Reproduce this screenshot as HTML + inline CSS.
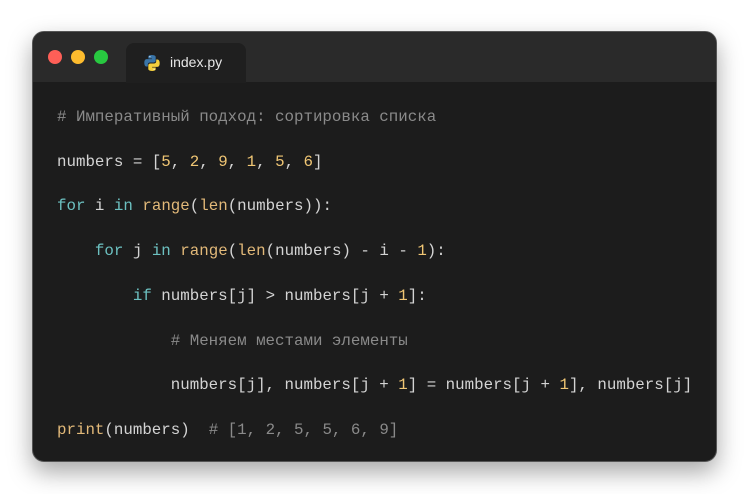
<!DOCTYPE html>
<html><head><meta charset="utf-8"><style>
html,body{margin:0;padding:0;background:#fff;width:749px;height:494px;overflow:hidden}
.win{position:absolute;left:32px;top:31px;width:685px;height:431px;border-radius:12px;background:#1c1c1c;box-shadow:0 10px 24px rgba(0,0,0,.35);border:1px solid #555;box-sizing:border-box;overflow:hidden}
.bar{position:absolute;left:0;top:0;right:0;height:50px;background:#2a2a2a}
.dot{position:absolute;top:18px;width:14px;height:14px;border-radius:50%}
.tab{position:absolute;left:93px;top:11px;width:120px;height:40px;background:#1f1f1f;border-radius:8px 8px 0 0}
.tab span{position:absolute;left:44px;top:11px;color:#e8e8e8;font:14px "Liberation Sans",sans-serif}
pre{position:absolute;left:24px;top:63px;margin:0;font:15.8px/44.7px "Liberation Mono","DejaVu Sans Mono",monospace;color:#d4d4d4}
.c{color:#8a8a8a}.k{color:#6cc0c0}.f{color:#e2b979}.n{color:#f0c674}
</style></head><body>
<div class="win">
<div class="bar"></div>
<div class="dot" style="left:15px;background:#fe5f57"></div>
<div class="dot" style="left:38px;background:#febc2e"></div>
<div class="dot" style="left:61px;background:#28c840"></div>
<div class="tab">
<svg style="position:absolute;left:17px;top:11px" width="18" height="18" viewBox="0 0 18 18">
<path d="M8.8 1C5 1 5.3 2.7 5.3 2.7V4.5h3.6v.6H3.8S1.3 4.8 1.3 8.7s2.2 3.8 2.2 3.8h1.3v-1.8s-.1-2.2 2.2-2.2h3.6s2.1 0 2.100-2.1V3.1S13 1 8.8 1z" fill="#3a75a8"/>
<path d="M9.2 17c3.8 0 3.5-1.7 3.5-1.7v-1.8H9.1v-.6h5.1s2.5.3 2.5-3.6-2.2-3.8-2.2-3.8h-1.3v1.8s.1 2.2-2.2 2.2H7.4s-2.1 0-2.1 2.1v3.3S5 17 9.2 17z" fill="#f3cf3e"/>
<circle cx="6.9" cy="2.7" r=".6" fill="#fff"/><circle cx="11.1" cy="15.3" r=".6" fill="#fff"/>
</svg>
<span>index.py</span></div>
<pre><span class="c"># Императивный подход: сортировка списка</span>
numbers = [<span class="n">5</span>, <span class="n">2</span>, <span class="n">9</span>, <span class="n">1</span>, <span class="n">5</span>, <span class="n">6</span>]
<span class="k">for</span> i <span class="k">in</span> <span class="f">range</span>(<span class="f">len</span>(numbers)):
    <span class="k">for</span> j <span class="k">in</span> <span class="f">range</span>(<span class="f">len</span>(numbers) - i - <span class="n">1</span>):
        <span class="k">if</span> numbers[j] &gt; numbers[j + <span class="n">1</span>]:
            <span class="c"># Меняем местами элементы</span>
            numbers[j], numbers[j + <span class="n">1</span>] = numbers[j + <span class="n">1</span>], numbers[j]
<span class="f">print</span>(numbers)  <span class="c"># [1, 2, 5, 5, 6, 9]</span></pre>
</div>
</body></html>
